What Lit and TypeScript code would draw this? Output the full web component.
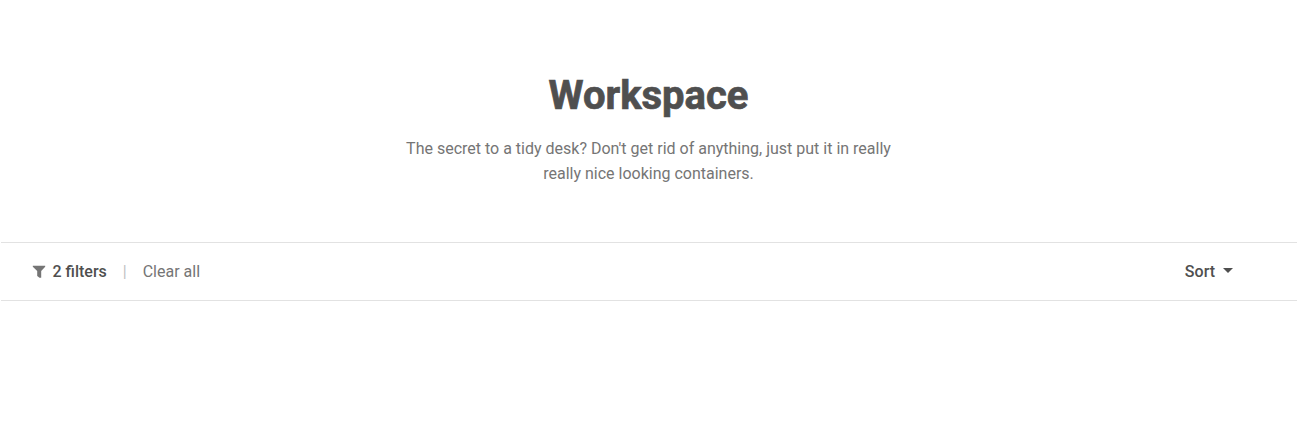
import { LitElement, html, css } from "lit";
import { customElement } from "lit/decorators.js";

@customElement("app-root")
export class AppRoot extends LitElement {
  static styles = css`
    :host { display: block; min-height: 437px; background: #fff; font-family: Roboto, sans-serif; font-size: 16px; line-height: 24px; color: #757575; }
    .hero { box-sizing: border-box; height: 242px; padding-top: 73px; text-align: center; }
    h1 { margin: 0; font-size: 40px; line-height: 46px; font-weight: 700; -webkit-text-stroke: 0.7px #4f4f4f; color: #4f4f4f; }
    p { margin: 17px auto 0; width: 510px; line-height: 25px; }
    .bar { box-sizing: border-box; height: 59px; margin-left: 1px; padding: 0 64px 0 31px; border-top: 1px solid #e2e2e2; border-bottom: 1px solid #e2e2e2; display: flex; align-items: center; }
    button { font: inherit; color: inherit; background: none; border: 0; padding: 0; margin: 0; display: flex; align-items: center; }
    .strong { font-weight: 500; color: #4f4f4f; }
    .funnel { margin-right: 6.500px; display: block; }
    .sep { color: #c0c0c4; margin: 0 16px; }
    .sort { margin-left: auto; }
    .caret { margin: 0 0 2px 8px; display: block; }
  `;
  render() {
    return html`
      <header class="hero">
        <h1>Workspace</h1>
        <p>The secret to a tidy desk? Don't get rid of anything, just put it in really really nice looking containers.</p>
      </header>
      <section class="bar">
        <button class="strong">
          <svg class="funnel" width="14" height="14" viewBox="0 0 14 14"><path fill="#757575" d="M.8.800h12.400v1L9.200 6v6.800H7.500L5.200 11V6L.8 1.800z"/></svg>2 filters
        </button>
        <span class="sep">|</span>
        <button>Clear all</button>
        <button class="strong sort">Sort<svg class="caret" width="10" height="5" viewBox="0 0 10 5"><path fill="#4f4f4f" d="M0 0h10L5 5z"/></svg></button>
      </section>`;
  }
}
